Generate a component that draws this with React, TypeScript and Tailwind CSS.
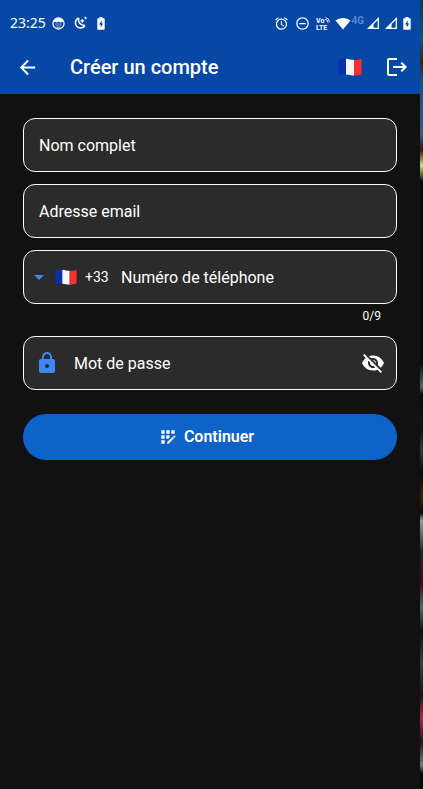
import { useState } from "react";
import type { ReactNode } from "react";
import {
  MdAlarm,
  MdAppRegistration,
  MdArrowBack,
  MdArrowDropDown,
  MdLock,
  MdLogout,
  MdRemoveCircleOutline,
  MdVisibility,
  MdVisibilityOff,
} from "react-icons/md";

function FrenchFlag({ className }: { className: string }) {
  return (
    <svg viewBox="0 0 24 18" className={className} aria-hidden="true" preserveAspectRatio="none">
      <path d="M0.5 2C3 0.8 5.5 0.4 8 0.8V16.6C5.5 16.2 3 16.5 0.5 17.4Z" fill="#0b2fa8" />
      <path d="M8 0.8C10.500 1.100 13.500 2 16 2V17.600C13.500 17.600 10.500 16.900 8 16.600Z" fill="#f4f6fa" />
      <path d="M16 2C18.500 2.100 21 1.600 23.500 1V16.400C21 17.200 18.500 17.700 16 17.600Z" fill="#f6322f" />
    </svg>
  );
}

function FaceIcon() {
  return (
    <svg viewBox="0 0 14 14" className="size-[13px]" aria-hidden="true">
      <circle cx="7" cy="7" r="6" fill="none" stroke="#fff" strokeWidth="1.300" />
      <path d="M1.200 6C1.500 2.500 4 1 7 1s5.500 1.500 5.800 5L11 5 9.500 6 7 5 4.500 6 3 5Z" fill="#fff" />
      <path d="M3.500 6.500h7V9L8.500 11h-3L3.500 9Z" fill="#fff" opacity="0.25" />
      <path d="M4 11h6L8.800 12.500H5.200Z" fill="#fff" opacity="0.6" />
    </svg>
  );
}

function MoonIcon() {
  return (
    <svg viewBox="0 0 14 14" className="size-[14px]" fill="none" stroke="#fff" aria-hidden="true">
      <path d="M5.500 2A5.200 5.200 0 1 0 12 9.500" strokeWidth="1.500" />
      <path d="M5.800 2C4.500 6 7.500 9.800 11.800 9.300" strokeWidth="1.500" />
      <path d="M9.300 3v3.800M7.400 4.900h3.800M12.500 0.800v2.400M11.300 2h2.400" strokeWidth="1.100" />
    </svg>
  );
}

function BatteryIcon() {
  return (
    <svg viewBox="0 0 8 13" className="h-[13px] w-2" aria-hidden="true">
      <path d="M2.500 0h3v1.300H7q0.700 0 0.700 0.700v10q0 0.700-0.700 0.700H1q-0.700 0-0.700-0.700V2q0-0.700 0.700-0.700h1.500Z" fill="#fff" />
      <path d="M4.700 3.500L2 7.600h1.700v3L6.200 6.500H4.700Z" fill="#0747a6" />
    </svg>
  );
}

function VolteIcon() {
  return (
    <svg viewBox="0 0 14 13" className="h-[13px] w-[14px]" aria-hidden="true">
      <g fill="#fff" fontFamily="Roboto, sans-serif" fontWeight="700">
        <text x="0" y="5.500" fontSize="7">Vo</text>
        <text x="0" y="12.500" fontSize="7">LTE</text>
      </g>
      <path d="M9 2.200a3.500 3.500 0 0 1 3 3.500M9.500 0.500a5 5 0 0 1 4 4.500" fill="none" stroke="#fff" strokeWidth="0.900" />
    </svg>
  );
}

function WifiIcon() {
  return (
    <svg viewBox="0 0 16 13" className="h-[13px] w-4" aria-hidden="true">
      <path d="M0.500 3.500C5 0 11 0 15.500 3.500L8 12.500Z" fill="#fff" />
    </svg>
  );
}

function SignalIcon() {
  return (
    <svg viewBox="0 0 12 12" className="size-3" aria-hidden="true">
      <path d="M11.300 1.500V11.300H1.500Z" fill="none" stroke="#fff" strokeWidth="1.300" />
      <path d="M6.500 6V11.500H1Z" fill="#fff" />
    </svg>
  );
}

function StatusBar() {
  return (
    <div className="flex h-[46px] items-center justify-between pl-[10px] pr-[9px]">
      <div className="flex items-center">
        <time className="font-['Noto_Sans',sans-serif] text-sm">23:25</time>
        <div className="ml-[6px] flex items-center gap-2">
          <FaceIcon />
          <MoonIcon />
          <div className="ml-[2px] flex">
            <BatteryIcon />
          </div>
        </div>
      </div>
      <div className="flex items-center">
        <MdAlarm className="size-[15px]" />
        <MdRemoveCircleOutline className="ml-[6px] size-[15px]" />
        <div className="ml-[6px] flex items-center gap-[5px]">
          <VolteIcon />
          <WifiIcon />
        </div>
        <span className="mb-1 text-[10px] font-bold leading-3 text-[#5c88cf]">4G</span>
        <div className="ml-[3px] flex items-center gap-[6px]">
          <SignalIcon />
          <SignalIcon />
          <BatteryIcon />
        </div>
      </div>
    </div>
  );
}

function Field({ children }: { children: ReactNode }) {
  return (
    <div className="flex h-[54px] items-center rounded-xl border border-white bg-[#2b2b2b]">
      {children}
    </div>
  );
}

const inputStyle =
  "h-full min-w-0 flex-1 bg-transparent text-base text-white outline-none placeholder:text-white placeholder:opacity-100";

export default function App() {
  const [phone, setPhone] = useState("");
  const [visible, setVisible] = useState(false);

  return (
    <div className="flex min-h-screen bg-[#111111] font-[Roboto,sans-serif] text-white">
      <div className="flex min-w-0 flex-1 flex-col">
        <header className="bg-[#0747a6]">
          <StatusBar />
          <div className="flex h-12 items-center pb-[6px] pl-4 pr-[11px]">
            <button type="button" aria-label="Retour">
              <MdArrowBack className="size-[23px]" />
            </button>
            <h1 className="ml-[31px] flex-1 text-xl font-medium">Créer un compte</h1>
            <button type="button" aria-label="Langue : français">
              <FrenchFlag className="h-[18px] w-6" />
            </button>
            <button type="button" aria-label="Quitter" className="ml-[23px]">
              <MdLogout className="size-6" />
            </button>
          </div>
        </header>

        <form className="flex flex-col px-[23px] pt-6" onSubmit={(event) => event.preventDefault()}>
          <div className="flex flex-col gap-3">
            <Field>
              <input type="text" aria-label="Nom complet" placeholder="Nom complet" className={`${inputStyle} px-[15px]`} />
            </Field>
            <Field>
              <input type="email" aria-label="Adresse email" placeholder="Adresse email" className={`${inputStyle} px-[15px]`} />
            </Field>
            <Field>
              <MdArrowDropDown className="ml-[3px] size-6 text-[#3f87f5]" />
              <FrenchFlag className="ml-1 h-4 w-[22px]" />
              <select aria-label="Indicatif du pays" className="ml-2 appearance-none bg-transparent text-sm outline-none">
                <option>+33</option>
              </select>
              <input
                type="tel"
                aria-label="Numéro de téléphone"
                placeholder="Numéro de téléphone"
                maxLength={9}
                value={phone}
                onChange={(event) => setPhone(event.target.value)}
                className={`${inputStyle} pl-3 pr-[15px]`}
              />
            </Field>
          </div>
          <p className="h-8 pr-4 pt-1 text-right text-xs leading-4">{phone.length}/9</p>
          <Field>
            <MdLock className="ml-[11px] size-6 text-[#3f87f5]" />
            <input
              type={visible ? "text" : "password"}
              aria-label="Mot de passe"
              placeholder="Mot de passe"
              className={`${inputStyle} pl-[15px]`}
            />
            <button
              type="button"
              aria-label="Afficher le mot de passe"
              className="mr-[11px]"
              onClick={() => setVisible(!visible)}
            >
              {visible ? <MdVisibility className="size-6" /> : <MdVisibilityOff className="size-6" />}
            </button>
          </Field>
          <button
            type="submit"
            className="mt-6 flex h-[46px] items-center justify-center gap-[6px] rounded-full bg-[#0d63c7] pr-2 font-semibold"
          >
            <MdAppRegistration className="size-5" />
            Continuer
          </button>
        </form>
      </div>
      <div
        aria-hidden="true"
        className="w-[3px] bg-[linear-gradient(to_bottom,#18334f_0%,#234a70_5%,#41210f_8%,#234a70_10%,#3c5a7c_17%,#3a1408_19%,#d8d28a_21%,#090909_23%,#0a0a0a_46%,#53656f_49%,#090909_50%,#181317_55%,#403540_57%,#080808_60%,#3c210a_63%,#080808_65%,#9a98a5_66%,#24202b_70%,#3e0b1b_74%,#55666b_77%,#0b0c10_80%,#374044_84%,#171217_88%,#a03043_91%,#24141b_94%,#737888_97%,#080808_98%)]"
      />
    </div>
  );
}
